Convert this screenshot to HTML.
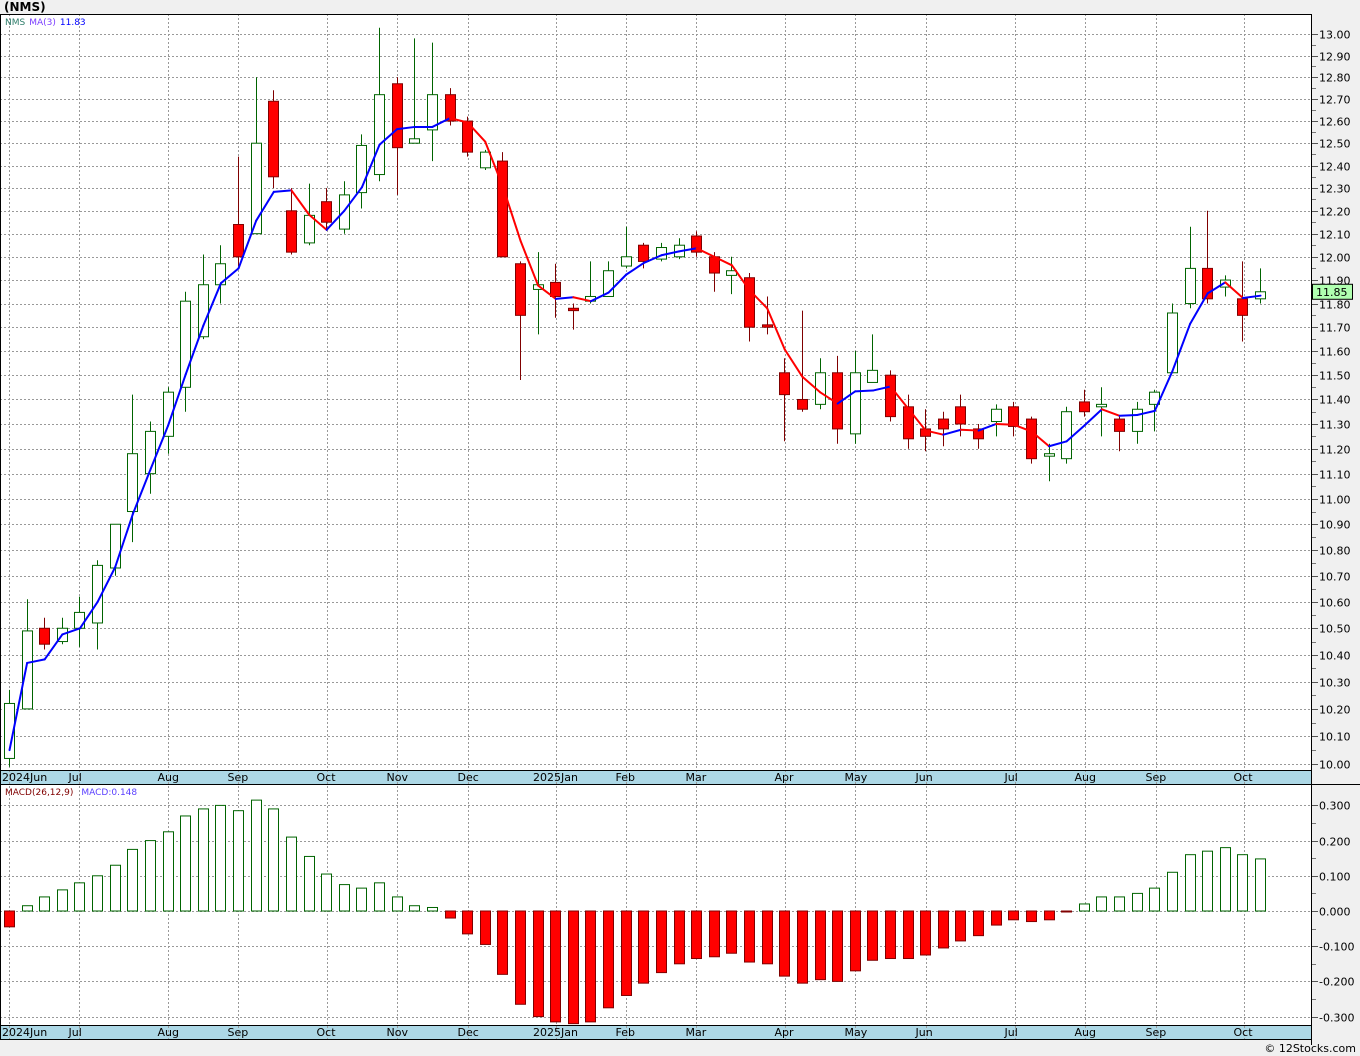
<!DOCTYPE html>
<html><head><meta charset="utf-8"><style>
html,body{margin:0;padding:0;background:#f0f0f0;width:1360px;height:1056px;overflow:hidden}
svg{display:block;font-family:"DejaVu Sans","Liberation Sans",sans-serif}
</style></head><body>
<svg id="s" width="1360" height="1056" xmlns="http://www.w3.org/2000/svg">
<rect x="0" y="0" width="1360" height="1056" fill="#f0f0f0"/>
<text x="4" y="11" font-size="12" font-weight="bold" fill="#000">(NMS)</text>
<rect x="0" y="14" width="1311" height="1025" fill="#fff"/>
<rect x="0" y="770" width="1311" height="14" fill="#add8e6"/>
<rect x="0" y="1025" width="1311" height="14" fill="#add8e6"/>
<g id="g"></g>
<line x1="0" y1="14.5" x2="1311" y2="14.5" stroke="#000"/>
<line x1="0" y1="770.5" x2="1311" y2="770.5" stroke="#000"/>
<line x1="0" y1="784.5" x2="1360" y2="784.5" stroke="#000"/>
<line x1="0" y1="1025.5" x2="1311" y2="1025.5" stroke="#000"/>
<line x1="0" y1="1039.5" x2="1311" y2="1039.5" stroke="#000"/>
<line x1="0.5" y1="14" x2="0.5" y2="1039" stroke="#000"/>
<line x1="1311.5" y1="14" x2="1311.5" y2="1045" stroke="#000"/>
<text x="5" y="25" font-size="9"><tspan fill="#2e7d6a">NMS</tspan><tspan fill="#7b3fff" dx="4">MA(3)</tspan><tspan fill="#0000ff" dx="4">11.83</tspan></text>
<text x="5" y="795" font-size="9"><tspan fill="#800000">MACD(26,12,9)</tspan><tspan fill="#5a3fff" dx="8">MACD:0.148</tspan></text>
<text x="1356" y="1052" font-size="11" text-anchor="end" fill="#000">© 12Stocks.com</text>
</svg>
<script>
var g=document.getElementById('g'),h='';
function Y(p){return 764-2782*Math.log(p/10)}
function M(v){return 911-v*352}
function X(i){return 9+i*17.62}
for(var k=0;k<=30;k++){var y=Math.round(Y(10+k/10))+0.5;
h+='<line x1="0" y1="'+y+'" x2="1311" y2="'+y+'" stroke="#999" stroke-dasharray="2,2"/>';
h+='<line x1="1311" y1="'+y+'" x2="1318" y2="'+y+'" stroke="#555"/>';
h+='<text x="1319" y="'+(y+4)+'" font-size="11" fill="#000">'+(10+k/10).toFixed(2)+'</text>';
var y2=Math.round(Y(10.05+k/10))+0.5; if(k<30) h+='<line x1="1311" y1="'+y2+'" x2="1316" y2="'+y2+'" stroke="#777"/>';}
for(var k=-3;k<=3;k++){var y=Math.round(M(k/10))+0.5;
h+='<line x1="0" y1="'+y+'" x2="1311" y2="'+y+'" stroke="#999" stroke-dasharray="2,2"/>';
h+='<line x1="1311" y1="'+y+'" x2="1318" y2="'+y+'" stroke="#555"/>';
h+='<text x="1319" y="'+(y+4)+'" font-size="11" fill="#000">'+(k<0?'-':'')+Math.abs(k/10).toFixed(3)+'</text>';
var y2=Math.round(M(k/10+0.05))+0.5; if(k<3) h+='<line x1="1311" y1="'+y2+'" x2="1316" y2="'+y2+'" stroke="#777"/>';}
var mons=[[9,'2024Jun'],[79,'Jul'],[168,'Aug'],[238,'Sep'],[327,'Oct'],[397,'Nov'],[468,'Dec'],[556,'2025Jan'],[626,'Feb'],[696,'Mar'],[785,'Apr'],[855,'May'],[926,'Jun'],[1015,'Jul'],[1085,'Aug'],[1156,'Sep'],[1244,'Oct']];
mons.forEach(function(m){var x=m[0]+0.5;
h+='<line x1="'+x+'" y1="14" x2="'+x+'" y2="1039" stroke="#999" stroke-dasharray="2,2"/>';
var tx=m[1].length>4?Math.max(2,m[0]-23):m[0]-m[1].length*3.5;
h+='<text x="'+tx+'" y="781" font-size="11" fill="#000">'+m[1]+'</text>';
h+='<text x="'+tx+'" y="1036" font-size="11" fill="#000">'+m[1]+'</text>';});
var d=[[10.02,10.22,10.27,9.99],[10.20,10.49,10.61,10.20],[10.50,10.44,10.54,10.42],[10.45,10.50,10.54,10.44],[10.50,10.56,10.62,10.43],[10.52,10.74,10.76,10.42],[10.73,10.90,10.90,10.70],[10.95,11.18,11.42,10.83],[11.10,11.27,11.31,11.02],[11.25,11.43,11.45,11.18],[11.45,11.81,11.85,11.35],[11.66,11.88,12.01,11.65],[11.88,11.97,12.05,11.80],[12.14,12.00,12.44,11.96],[12.10,12.50,12.80,12.10],[12.69,12.35,12.74,12.30],[12.20,12.02,12.30,12.01],[12.06,12.18,12.32,12.05],[12.24,12.15,12.30,12.12],[12.12,12.27,12.33,12.10],[12.28,12.49,12.54,12.21],[12.36,12.72,13.03,12.33],[12.77,12.48,12.80,12.27],[12.50,12.52,12.98,12.50],[12.56,12.72,12.96,12.42],[12.72,12.60,12.75,12.58],[12.60,12.46,12.62,12.44],[12.39,12.46,12.47,12.38],[12.42,12.00,12.46,12.00],[11.97,11.75,11.98,11.48],[11.86,11.88,12.02,11.67],[11.89,11.83,11.97,11.74],[11.78,11.77,11.80,11.69],[11.81,11.83,11.98,11.80],[11.83,11.94,11.98,11.83],[11.96,12.00,12.13,11.95],[12.05,11.98,12.06,11.95],[11.99,12.04,12.06,11.98],[12.00,12.05,12.08,11.99],[12.09,12.02,12.11,12.00],[12.00,11.93,12.02,11.85],[11.92,11.94,12.00,11.84],[11.91,11.70,11.93,11.64],[11.71,11.70,11.83,11.67],[11.51,11.42,11.57,11.23],[11.40,11.36,11.77,11.35],[11.38,11.51,11.57,11.36],[11.51,11.28,11.58,11.22],[11.26,11.51,11.60,11.22],[11.47,11.52,11.67,11.47],[11.50,11.33,11.52,11.31],[11.37,11.24,11.42,11.20],[11.28,11.25,11.36,11.19],[11.32,11.28,11.35,11.21],[11.37,11.30,11.42,11.25],[11.28,11.24,11.30,11.20],[11.31,11.36,11.38,11.25],[11.37,11.29,11.39,11.25],[11.32,11.16,11.33,11.14],[11.17,11.18,11.22,11.07],[11.16,11.35,11.37,11.14],[11.39,11.35,11.44,11.33],[11.37,11.38,11.45,11.25],[11.32,11.27,11.33,11.19],[11.27,11.36,11.39,11.22],[11.38,11.43,11.44,11.27],[11.51,11.76,11.80,11.51],[11.80,11.95,12.13,11.78],[11.95,11.82,12.20,11.80],[11.87,11.90,11.92,11.83],[11.82,11.75,11.98,11.64],[11.82,11.85,11.95,11.80]];
d.forEach(function(c,i){var x=Math.round(X(i)),up=c[1]>=c[0];var col=up?'#006400':'#800000';
h+='<line x1="'+(x+0.5)+'" y1="'+Y(c[2])+'" x2="'+(x+0.5)+'" y2="'+Y(c[3])+'" stroke="'+col+'"/>';
var t=Y(Math.max(c[0],c[1])),b=Y(Math.min(c[0],c[1]));if(b-t<1)b=t+1;
h+='<rect x="'+(x-4.5)+'" y="'+t+'" width="10" height="'+(b-t)+'" fill="'+(up?'#fff':'#f00')+'" stroke="'+col+'"/>';});
var ma=[10.05,10.37];for(var i=2;i<d.length;i++)ma.push((d[i][1]+d[i-1][1]+d[i-2][1])/3);
for(var i=1;i<ma.length;i++){h+='<line x1="'+(X(i-1)+0.5)+'" y1="'+Y(ma[i-1])+'" x2="'+(X(i)+0.5)+'" y2="'+Y(ma[i])+'" stroke="'+(ma[i]>=ma[i-1]?'#0000ff':'#ff0000')+'" stroke-width="2" stroke-linecap="round"/>';}
var mv=[-0.045,0.015,0.04,0.06,0.08,0.10,0.13,0.175,0.20,0.225,0.27,0.29,0.30,0.285,0.315,0.29,0.21,0.155,0.105,0.075,0.065,0.08,0.04,0.015,0.01,-0.02,-0.065,-0.095,-0.18,-0.265,-0.3,-0.315,-0.32,-0.315,-0.275,-0.24,-0.205,-0.175,-0.15,-0.135,-0.13,-0.12,-0.145,-0.15,-0.185,-0.205,-0.195,-0.2,-0.17,-0.14,-0.135,-0.135,-0.125,-0.105,-0.085,-0.07,-0.04,-0.025,-0.03,-0.025,-0.002,0.02,0.04,0.04,0.05,0.065,0.11,0.16,0.17,0.18,0.16,0.148];
mv.forEach(function(v,i){var x=Math.round(X(i));var t=Math.min(M(v),911),b=Math.max(M(v),911);
h+='<rect x="'+(x-4.5)+'" y="'+t+'" width="10" height="'+Math.max(1,b-t)+'" fill="'+(v<0?'#f00':'#fff')+'" stroke="'+(v<0?'#800000':'#006400')+'"/>';});
h+='<rect x="1312.5" y="'+(Y(11.85)-7.5)+'" width="40" height="15" fill="#b0ffb0" stroke="#000"/><text x="1316" y="'+(Y(11.85)+4)+'" font-size="11">11.85</text>';
g.innerHTML=h;
</script>
</body></html>
